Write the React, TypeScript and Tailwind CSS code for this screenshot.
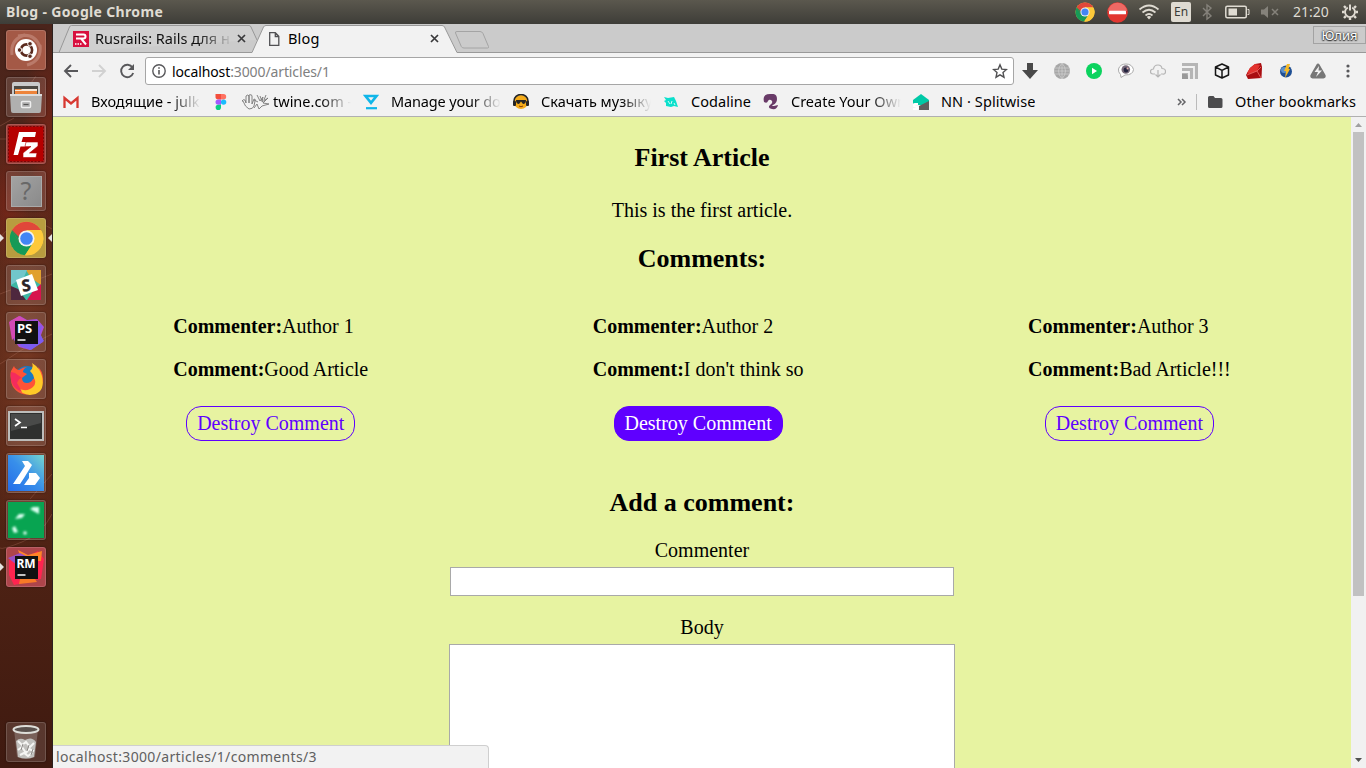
import React from "react";

type Kids = { children?: React.ReactNode };

function Svg({ w = 16, h = 16, vb, children, className = "" }: Kids & { w?: number; h?: number; vb?: string; className?: string }) {
  return (
    <svg width={w} height={h} viewBox={vb ?? `0 0 ${w} ${h}`} className={`block shrink-0 ${className}`} fill="none">
      {children}
    </svg>
  );
}

function ChromeLogo({ size }: { size: number }) {
  return (
    <Svg w={size} h={size} vb="0 0 48 48">
      <circle cx="24" cy="24" r="23" fill="#fdc93a" />
      <path d="M24 24 4.1 12.5A23 23 0 0 1 43.9 12.5H24z" fill="#e0473a" />
      <path d="M4.1 12.5A23 23 0 0 0 22 47l11.500-17.500L24 24z" fill="#169a57" />
      <path d="M4.1 12.5 14 29.500 24 13.500V10z" fill="#e0473a" />
      <path d="M4.1 12.5 14 29.500l2-5z" fill="#169a57" />
      <path d="M24 13.500h20.500A23 23 0 0 1 22 47l11-17z" fill="#fdc93a" />
      <circle cx="24" cy="24" r="11" fill="#f3f3f3" />
      <circle cx="24" cy="24" r="8.600" fill="#4285f4" />
    </Svg>
  );
}

function TopBar() {
  return (
    <header className="flex h-6 shrink-0 items-center bg-linear-to-b from-[#5b584e] to-[#3e3d38] pl-1.5 font-['Noto_Sans',sans-serif] text-[#dfdbd2]">
      <div className="flex-1 pb-px text-[14px] font-bold tracking-[0.34px]">Blog - Google Chrome</div>
      <div className="flex h-6 w-[291px] items-center">
        <div className="flex w-8 justify-start"><ChromeLogo size={20} /></div>
        <div className="flex w-8">
          <Svg w={21} h={21}>
            <circle cx="10.5" cy="10.5" r="10.3" fill="#e23630" />
            <path d="M1 9a9.600 9.600 0 0 1 19 0z" fill="#ee6964" />
            <rect x="2" y="8.700" width="17" height="3.600" rx=".6" fill="#fff" />
          </Svg>
        </div>
        <div className="flex w-8">
          <Svg w={22} h={18} className="-ml-px">
            <path d="M1.500 6.500Q11-1.500 20.500 6.500M4.500 9.500q6.500-5.500 13 0M7.500 12.500q3.500-3 7 0" stroke="#dfdbd2" strokeWidth="1.700" />
            <path d="M8.800 14q2.200-1.800 4.400 0L11 16.500z" fill="#dfdbd2" />
          </Svg>
        </div>
        <div className="flex h-5 w-5 items-center justify-center rounded-[2px] bg-[#dfdbd2] text-[12px] text-[#3c3b37]">En</div>
        <Svg w={12} h={18} className="ml-[10px]">
          <path d="M2 5l8 8-4 3V2l4 3-8 8" stroke="#85827b" strokeWidth="1.400" />
        </Svg>
        <Svg w={25} h={14} className="ml-3">
          <rect x=".8" y="1.200" width="20.500" height="11.500" rx="1.500" stroke="#dfdbd2" strokeWidth="1.500" />
          <rect x="3.500" y="3.500" width="8.500" height="7" fill="#dfdbd2" />
          <path d="M22.500 4.500h1.500v5h-1.500" stroke="#dfdbd2" />
        </Svg>
        <Svg w={18} h={14} className="ml-[11px]">
          <path d="M0 4.500h3L7 1v12L3 9.500H0z" fill="#85827b" />
          <path d="M11 4l6 6m0-6l-6 6" stroke="#85827b" strokeWidth="1.500" />
        </Svg>
        <div className="ml-3.5 w-[41px] pb-px text-[14px]">21:20</div>
        <Svg w={18} h={18} className="ml-[7px]">
          <path d="M6.800 4.600A5 5 0 1 0 11.200 4.600" stroke="#dfdbd2" strokeWidth="1.900" />
          <path d="M9 1.500v6" stroke="#dfdbd2" strokeWidth="2" />
          <path d="M4.800 4.800L3 3M3.500 9H1m3.800 4.200L3 15M9 14.500V17m4.200-3.800L15 15M14.500 9H17m-3.800-4.200L15 3" stroke="#dfdbd2" strokeWidth="2.400" />
        </Svg>
      </div>
    </header>
  );
}

function Tile({ children, tint = "bg-[#ffffff20]" }: Kids & { tint?: string }) {
  return (
    <div className={`relative flex h-10 w-10 shrink-0 items-center justify-center rounded-[3px] border border-[#ffffff26] shadow-[0_0_2px_#0008] ${tint}`}>
      {children}
    </div>
  );
}

function Launcher() {
  return (
    <aside className="relative flex w-[53px] shrink-0 flex-col border-r border-[#2c211f] bg-linear-to-b from-[#4a241b] via-[#5a2817] to-[#3f1a10] pt-1.5 pb-1.5 pl-1.5">
      <svg className="absolute top-0 left-0" width="52" height="744" fill="none">
        <defs>
          <radialGradient id="glowA"><stop stopColor="#8a2416" stopOpacity=".6" /><stop offset="1" stopColor="#8a2416" stopOpacity="0" /></radialGradient>
          <radialGradient id="glowB"><stop stopColor="#7d3b24" stopOpacity=".8" /><stop offset="1" stopColor="#7d3b24" stopOpacity="0" /></radialGradient>
        </defs>
        <ellipse cx="48" cy="115" rx="26" ry="110" fill="url(#glowA)" />
        <ellipse cx="8" cy="180" rx="26" ry="70" fill="url(#glowA)" />
        <ellipse cx="26" cy="340" rx="44" ry="190" fill="url(#glowB)" />
        <path d="M0 102l14-8M0 115h6m30-63l-10 14M52 205q-18-12-34-5T0 216M0 340q25-18 52-30M52 490q-10 20-30 28T0 524M52 450L30 475M0 270l52-20" stroke="#b87a66" strokeOpacity=".3" />
      </svg>
      <div className="relative flex flex-1 flex-col gap-[7px]">
        <Tile tint="bg-[#a45946]">
          <Svg w={38} h={38}>
            <path d="M5 24Q3 8 18 4M33 14q2 16-13 20M11 5q17-4 22 11" stroke="#cf9c8e" strokeWidth="3" strokeOpacity=".5" />
            <circle cx="19" cy="19" r="11" fill="#fff" />
            <circle cx="19.500" cy="19" r="5.600" stroke="#5a2a1e" strokeWidth="2.600" />
            <g fill="#5a2a1e" stroke="#fff" strokeWidth="1"><circle cx="12.500" cy="19" r="2.300" /><circle cx="23" cy="12.800" r="2.300" /><circle cx="23" cy="25.200" r="2.300" /></g>
          </Svg>
        </Tile>
        <Tile>
          <Svg w={34} h={36}>
            <path d="M3 5q0-2 2-2h24q2 0 2 2v12H3z" fill="#c9c9c9" />
            <path d="M5 7h24v9H5z" fill="#4d4942" /><path d="M6 10h22v6H6z" fill="#ed843b" /><path d="M6 11h6l1-1h15v2H6z" fill="#f7e6d6" />
            <path d="M1 15h32l-1 17q0 2-2 2H4q-2 0-2-2z" fill="#b0b0af" />
            <path d="M1 15h32v2H1z" fill="#ddd" />
            <rect x="12.500" y="22.500" width="9" height="6" rx="1" fill="#aaa" stroke="#eee" strokeWidth="1.500" /><path d="M14.500 25.500h5" stroke="#555" />
          </Svg>
        </Tile>
        <Tile tint="bg-[#9c3b35]">
          <Svg w={38} h={38}>
            <rect x="1.500" y="1.500" width="35" height="35" fill="#b60000" stroke="#790607" strokeDasharray="2 1.500" />
            <path d="M12 7h17l-1 5H16l-1.500 5H23l-1 4.500h-8.500L11 30H6.500z" fill="#fff" />
            <path d="M19 17h12v4l-8.500 7H30l-1 4.500H16V28l8-6.500h-6z" fill="#fff" stroke="#b60000" strokeWidth=".6" />
          </Svg>
        </Tile>
        <Tile>
          <div className="flex h-[31px] w-[31px] items-center justify-center border border-[#aaa] bg-linear-to-br from-[#a3a3a3] to-[#8a8a8a] font-['Noto_Sans',sans-serif] text-[25px] text-[#686868]">?</div>
        </Tile>
        <Tile tint="bg-[#b89c3f]"><ChromeLogo size={35} /></Tile>
        <Tile>
          <Svg w={32} h={32}>
            <rect x="1" y="1" width="30" height="30" fill="#3db6a4" />
            <path d="M16 1h15v15L21 9z" fill="#e1a02e" /><path d="M31 15v16H17l6-9z" fill="#d7144e" /><path d="M16 31H1V17l7 3z" fill="#4e283e" /><path d="M1 1h16l-3 7-13 8z" fill="#71c6cb" />
            <path d="M6 11l16-6 6 16-17 6z" fill="#fff" />
            <text x="16" y="22" textAnchor="middle" fontFamily="Noto Sans" fontSize="16" fontWeight="700" fill="#2b2427" stroke="#2b2427" strokeWidth=".5" transform="rotate(-10 16 16)">S</text>
          </Svg>
        </Tile>
        <Tile>
          <Svg w={38} h={38}>
            <path d="M3 8l10-5 7 4 10-1 7 8-3 8 2 7-13 8-11-3-5-7z" fill="#a650dc" /><path d="M2 9l10-6 7 4-8 14-6 6z" fill="#d44bb6" /><path d="M21 18l14-6-2 9 4 7-13 9-11-4z" fill="#7c5cf0" />
            <rect x="8" y="8" width="23" height="23" fill="#111" />
            <text x="10" y="20" fontFamily="Noto Sans" fontSize="13" fontWeight="700" fill="#fff">PS</text><path d="M10.500 27h8" stroke="#fff" strokeWidth="1.500" />
          </Svg>
        </Tile>
        <Tile>
          <Svg w={38} h={38}>
            <circle cx="20" cy="19" r="13" fill="#197ac3" />
            <path d="M4 11l3-5q1 3 5 4 4-3 8-3-4 2-4 5l4 2-5 4q0 5 5 5 4 0 6-4 3-1 0-3 8-2 5-9 5 4 5 12a16 15 0 0 1-32 1Q3 14 4 11z" fill="#ff5337" />
            <path d="M25 3q8 5 10 13 4 18-12 19-9-1-11-6 9 3 14-2 4-4 1-9 0-3-4-7 4-3 2-8z" fill="#ffc928" />
            <path d="M4 12q-2 15 11 20l-5-9q2-5 5-5l-7-5z" fill="#f52b5d" />
          </Svg>
        </Tile>
        <Tile>
          <Svg w={36} h={30}>
            <rect x="1" y="1" width="34" height="28" fill="#2f302f" stroke="#bdbdbb" strokeWidth="2" />
            <path d="M3 3h30v9L3 20z" fill="#fff" fillOpacity=".13" />
            <path d="M7 8l5 3.500L7 15m6 1.500h6" stroke="#fff" strokeWidth="1.700" />
          </Svg>
        </Tile>
        <Tile>
          <Svg w={38} h={38}>
            <defs><linearGradient id="br" x1="1" x2="0" y1="0" y2="1"><stop stopColor="#75d5cf" /><stop offset=".5" stopColor="#388fea" /><stop offset="1" stopColor="#246ce9" /></linearGradient></defs>
            <rect x="1" y="1" width="36" height="36" fill="url(#br)" />
            <path d="M15 7h6l4 4-8 13-4 6H6l8-12 4-6z" fill="#fff" /><path d="M22 19h7l4 5-5 7H17l5-7z" fill="#fff" />
          </Svg>
        </Tile>
        <Tile>
          <Svg w={38} h={38}>
            <defs><filter id="soft"><feGaussianBlur stdDeviation="1" /></filter></defs>
            <rect x="1" y="1" width="36" height="36" fill="#08a451" />
            <g fill="#d9fff0" filter="url(#soft)"><path d="M23 8l3-2 6 0 0 7-4-2z" /><path d="M8 18l4-5 6 0-3 4z" /><path d="M5 27l3-2 3 6-4 1z" /><circle cx="18" cy="32" r="1.800" /></g>
          </Svg>
        </Tile>
        <Tile tint="bg-[#ae454b]">
          <Svg w={38} h={38}>
            <path d="M2 12l11-6 8 2 10-5 6 8-3 20-14 3-13 3L2 27z" fill="#ff244f" /><path d="M11 2l10 5 14-4-1 10H15z" fill="#ff8427" /><path d="M1 10l12-5 8 4-11 8z" fill="#9850c4" /><path d="M13 31h15l2 3-18 2z" fill="#f87a27" />
            <rect x="8" y="8" width="23" height="23" fill="#111" />
            <text x="9.500" y="20" fontFamily="Noto Sans" fontSize="12" fontWeight="700" fill="#fff">RM</text><path d="M10.500 27h8" stroke="#fff" strokeWidth="1.500" />
          </Svg>
        </Tile>
        <div className="mt-auto">
          <Tile>
            <Svg w={38} h={38}>
              <path d="M7 6l3 28q9 4 18 0l3-28z" fill="#ddd" fillOpacity=".25" />
              <path d="M9 18q4-4 9-1 7-4 11 2l-2 15q-8 3-16 0z" fill="#c1c0bd" />
              <path d="M11 18l4 4 4-3 4 5 4-4M11 27l4-3 4 6 3-4 5 2M13 32l4-2 4 3 4-3" stroke="#f5f5f3" strokeWidth="2" /><path d="M16 21l-2 6m8-5l-2 6m6-2l-2 6" stroke="#8c8986" />
              <ellipse cx="19" cy="6.500" rx="12.500" ry="3.500" fill="#5a514d" stroke="#deded9" strokeWidth="2" />
            </Svg>
          </Tile>
        </div>
      </div>
      <svg className="absolute top-[208px] left-0" width="52" height="12" fill="#e5e2df"><path d="M0 2l4 4-4 4zM52 2l-4 4 4 4z" /></svg>
      <svg className="absolute top-[537px] left-0" width="5" height="12" fill="#e5e2df"><path d="M0 2l4 4-4 4z" /></svg>
    </aside>
  );
}

function CloseX() {
  return <Svg w={9} h={9}><path d="M1 1l7 7m0-7l-7 7" stroke="#39393b" strokeWidth="1.700" /></Svg>;
}

function TabStrip() {
  return (
    <div className="relative flex h-[29px] shrink-0 bg-[#cbcbcb] text-[14.500px]">
      <svg className="absolute inset-0" width="1313" height="29" fill="none">
        <path d="M0 28.500H6L16.500 3q.6-1.500 2-1.500H196q1.500 0 2 1.500l6 13" stroke="#989898" fill="#d0d0d0" />
        <path d="M0 28.500H199L210.500 3q.8-1.500 2.500-1.500H389q1.700 0 2.500 1.500L404 28.500H1313V30H0z" fill="#f2f2f2" />
        <path d="M0 28.500H199L210.500 3q.8-1.500 2.500-1.500H389q1.700 0 2.500 1.500L404 28.500H1313" stroke="#999" />
        <path d="M404 7.500h23q2 0 3 2l5.500 13q.5 1.500-1 1.500H411q-2 0-2.700-1.500L402.500 9q-.5-1.500 1.500-1.500z" stroke="#a4a4a4" />
      </svg>
      <div className="relative flex w-[195px] items-center pl-5">
        <Svg>
          <rect width="16" height="16" fill="#d8103f" />
          <path d="M3 3.500h7.500q2 0 2 2t-2 2H8l5 6M3 7.500h5" stroke="#fff" strokeWidth="2" /><path d="M2 13h7" stroke="#fff" strokeWidth="1.500" strokeDasharray="1.500 1" />
        </Svg>
        <div className="ml-1.5 w-[138px] overflow-hidden mask-r-from-75% whitespace-nowrap text-[#111]">Rusrails: Rails для н</div>
        <div className="ml-1"><CloseX /></div>
      </div>
      <div className="relative flex flex-1 items-center pl-5">
        <Svg w={12} h={16}><path d="M1.700 1.700h5.600l3.500 3.600v9H1.700zM7.300 1.700v3.800h3.500" stroke="#515154" strokeWidth="1.300" /></Svg>
        <div className="ml-2 w-[142px] text-black tracking-[0.2px]">Blog</div>
        <CloseX />
      </div>
      <div className="relative mt-[2px] h-[18px] w-[53px] border border-[#a3a3a3] text-center text-[13px] leading-[17px] text-white [text-shadow:0_0_2px_#333,0_0_2px_#333,0_1px_1px_#333]">Юлия</div>
    </div>
  );
}

const extensions: React.ReactNode[] = [
  <path key="d" d="M5 0h6v7h5l-8 9-8-9h5z" fill="#494949" />,
  <g key="g"><circle cx="8" cy="8" r="8" fill="#a7a7a7" /><path d="M1 5h14M0 8h16M1 11h14M8 0v16M8 0Q1 8 8 16M8 0q7 8 0 16" stroke="#d3d3d3" strokeWidth=".7" /></g>,
  <g key="p"><circle cx="8" cy="8" r="8" fill="#0bd35e" /><path d="M6 4.800L11 8l-5 3.200z" fill="#fff" /></g>,
  <g key="e"><path d="M2.500 11.500Q0 9 .5 6 2 1 8 1t7.500 5.500Q15 12 7 12l-4 2.500z" fill="#fff" stroke="#aaa" /><circle cx="7.800" cy="6.500" r="4.300" fill="#756878" /><circle cx="8" cy="7" r="2.400" fill="#23233e" /><circle cx="9.500" cy="5.500" r="1" fill="#e2b2ac" /></g>,
  <path key="c" d="M5 11H3Q.5 11 .5 8.500T3.500 6Q4 2 8 2q3.500 0 4 3.500 3.500 0 3.500 3T12.500 11H11M8 7v7m-2.500-2.500L8 14l2.500-2.500" stroke="#b5b5b5" strokeWidth="1.200" />,
  <g key="r"><path d="M0 0h16v16H0z" fill="#b5b5b5" /><path d="M0 4h12v12M0 9h7v7" stroke="#f2f2f2" strokeWidth="1.800" /><path d="M0 11h4q2 0 2 5H0z" fill="#999" /></g>,
  <path key="b" d="M8 1l6.500 3v8L8 15l-6.500-3V4zM1.500 4L8 7.300 14.500 4M8 7.300V15" stroke="#161616" strokeWidth="1.500" strokeLinejoin="round" />,
  <g key="rb"><path d="M9 1l6-1 1 4-.5 11L2 16l-2-4 4-7z" fill="#a90d10" /><path d="M9 1l5 1-3 6-8 3-2-1 3-5z" fill="#e3332f" /><path d="M1 12l10-4 4-4M11 8l4 7" stroke="#f0716c" strokeWidth=".8" /></g>,
  <g key="z"><circle cx="8" cy="8.500" r="6" fill="#1f4f94" /><circle cx="6" cy="7" r="3" fill="#5d91cb" /><path d="M9 1h3l-1.500 5H12l-5 9 1-7H6z" fill="#f5b927" /></g>,
  <g key="a"><path d="M8 .5q1 0 1.500 1l6 10.500q1 3-2 3.500h-11Q-.5 15 .5 12l6-10.500Q7 .5 8 .5z" fill="#777" /><path d="M9 3L4.500 9H8l-2 5 6-6.500H8.500z" fill="#f2f2f2" /></g>,
];

function Toolbar() {
  return (
    <div className="flex h-9 shrink-0 items-center bg-[#f2f2f2] text-[14px]">
      <div className="flex w-[92px] items-center gap-3 pl-[10px]">
        <Svg><path d="M15 8H2m6-6L2 8l6 6" stroke="#58585b" strokeWidth="1.900" /></Svg>
        <Svg><path d="M1 8h13M8 2l6 6-6 6" stroke="#d1d1d1" strokeWidth="1.900" /></Svg>
        <Svg><path d="M13.500 4.500A6.200 6.200 0 1 0 14.200 10" stroke="#58585b" strokeWidth="1.900" /><path d="M15 1v6H9z" fill="#58585b" /></Svg>
      </div>
      <div className="flex h-7 w-[869px] items-center rounded-[3px] border border-[#a6a6a6] bg-white pr-[5px] pl-[5px]">
        <Svg><circle cx="8" cy="8" r="6.200" stroke="#58585b" strokeWidth="1.400" /><path d="M8 7v4.500M8 4.300v1.500" stroke="#58585b" strokeWidth="1.600" /></Svg>
        <div className="ml-[5px] flex-1 tracking-[-0.11px] text-[#808080]"><span className="text-black">localhost</span>:3000/articles/1</div>
        <Svg><path d="M8 1.800l1.800 4.300 4.700.4L11 9.600l1 4.600L8 11.800l-4 2.400 1-4.600L1.500 6.500l4.700-.4z" stroke="#505052" strokeWidth="1.400" /></Svg>
      </div>
      <div className="ml-2 flex gap-4">{extensions.map((e, i) => <Svg key={i}>{e}</Svg>)}</div>
      <Svg w={4} h={16} className="ml-5"><g fill="#58585b"><circle cx="2" cy="3" r="1.600" /><circle cx="2" cy="8" r="1.600" /><circle cx="2" cy="13" r="1.600" /></g></Svg>
    </div>
  );
}

function Mark({ icon, label, width, fade, before, tracking = "" }: { icon: React.ReactNode; label: string; width: string; fade?: boolean; before?: React.ReactNode; tracking?: string }) {
  return (
    <div className={`flex shrink-0 items-center ${width}`}>
      <Svg>{icon}</Svg>
      <div className={`ml-3 flex items-center overflow-hidden whitespace-nowrap ${tracking} ${fade ? "w-[110px] mask-r-from-72%" : ""}`}>{before}{label}</div>
    </div>
  );
}

function Bookmarks() {
  return (
    <div className="flex h-7 shrink-0 items-center border-b border-[#b0b0b0] bg-[#f2f2f2] pb-[2px] pl-[10px] text-[14.500px] text-black">
      <Mark width="w-[150px]" fade label="Входящие - julk" icon={<><path d="M1 3h14v11H1z" fill="#f5f5f5" /><path d="M1.500 14V4L8 9.500 14.500 4v10" stroke="#d73932" strokeWidth="2.300" /></>} />
      <Mark width="w-[150px]" fade label="twine.com -" before={
        <Svg w={30} h={18} className="mr-0.5"><path d="M1 8q1-2 3-1l1 3V3q2-2 3 0v7-8q3-1 3 1v8l2-5q2 0 1 2l-1 5q-1 3-5 3-4-2-6-8zM16 2l3 6 3-4-1 5 6-4-5 5 6 1-7 2-3 3-2-5-3 4m0-8l4 2m2-6l2 5m4-6l-2 5" stroke="#777" strokeWidth=".9" /></Svg>
      } icon={<><path d="M2.500 0H8v5.400H5.200A2.700 2.700 0 0 1 2.500 2.700z" fill="#f34e3c" /><path d="M8 0h2.500a2.700 2.700 0 0 1 0 5.400H8z" fill="#ff7262" /><path d="M8 5.400H5.200a2.700 2.700 0 0 0 0 5.400H8z" fill="#a259ff" /><circle cx="10.600" cy="8.100" r="2.700" fill="#1abcfe" /><path d="M8 10.800H5.200A2.700 2.700 0 1 0 8 13.500z" fill="#0acf83" /></>} />
      <Mark width="w-[150px]" fade tracking="tracking-[-0.15px]" label="Manage your do" icon={<><path d="M2.500 2h11L8 8.800z" stroke="#10b6e9" strokeWidth="2.700" /><path d="M3 14.200h11" stroke="#10b6e9" strokeWidth="2.200" /></>} />
      <Mark width="w-[150px]" fade label="Скачать музыку" icon={<><circle cx="8" cy="8" r="7" fill="#f5ac1a" /><path d="M1 9V7a7 6.500 0 0 1 14 0v2" stroke="#252525" strokeWidth="1.600" /><rect y="7" width="3" height="5" rx="1" fill="#252525" /><rect x="13" y="7" width="3" height="5" rx="1" fill="#252525" /><path d="M3 6h10q0 4-3 4L8 7.500 6 10Q3 10 3 6z" fill="#252525" /><path d="M6 12q2 1.500 4 0" stroke="#843b0e" /></>} />
      <Mark width="w-[100px]" tracking="tracking-[0.05px]" label="Codaline" icon={<><path d="M1 3l4 1 6-1 2 4 2 6-4-1-3 1-5-1v-3L1 7l2-1z" fill="#0be0cc" /><path d="M5 7l2 3m2-3l-1 3m3-1l1 2" stroke="#e8fffc" strokeWidth=".9" /></>} />
      <Mark width="w-[150px]" fade label="Create Your Own" icon={<path d="M1 8Q-1 0 7 0q7-1 7 5 0 4-4 6-2 1 1 1l4-1q-1 5-6 4-5-1-2-4 4-3 1-5-2-1-3 1-1 3-4 1z" fill="#693b68" />} />
      <Mark width="w-[255px]" tracking="tracking-[0.08px]" label="NN · Splitwise" icon={<><path d="M0 6l8-6 8 6v5H0z" fill="#00c9a7" /><path d="M6 16V12l10-5v9z" fill="#5e5e5e" /><path d="M5 10H2q-2 0-1 2l3 1q2 1 0 2H0" stroke="#fff" strokeWidth="2" /></>} />
      <Svg w={10} h={10} className="ml-[9px]"><path d="M1 2l3 3L1 8m4-6l3 3L5 8" stroke="#646467" strokeWidth="1.500" /></Svg>
      <div className="ml-[9px] h-4 w-px bg-[#bbb]" />
      <Svg className="ml-[11px]"><path d="M0 3.500Q0 2 1.500 2h4L7 4h6q1.500 0 1.500 1.500v7Q14.500 14 13 14H1.500Q0 14 0 12.500z" fill="#4c4c4e" /></Svg>
      <div className="ml-[11px] whitespace-nowrap tracking-[0.06px]">Other bookmarks</div>
    </div>
  );
}

function CommentCard({ author, body, active }: { author: string; body: string; active?: boolean }) {
  return (
    <div className="flex flex-col items-center">
      <div className="flex flex-col gap-5 self-stretch leading-[23px]">
        <p><b>Commenter:</b>{author}</p>
        <p><b>Comment:</b>{body}</p>
      </div>
      <button className={`mt-[25px] h-[35px] rounded-[15px] border border-[#5f00ff] px-[10px] leading-[33px] ${active ? "bg-[#5f00ff] text-white" : "text-[#5f00ff]"}`}>Destroy Comment</button>
    </div>
  );
}

function Page() {
  return (
    <main className="flex min-h-0 flex-1 overflow-hidden bg-[#e7f3a1]">
      <div className="flex flex-1 flex-col items-center px-2 pt-[26px] font-['Liberation_Serif',serif] text-[20px] leading-[23px] text-black">
        <h2 className="text-[26px] leading-[30px] font-bold">First Article</h2>
        <p className="mt-[26px]">This is the first article.</p>
        <h2 className="mt-[22px] text-[26px] leading-[30px] font-bold">Comments:</h2>
        <section className="mt-[41px] flex justify-around self-stretch">
          <CommentCard author="Author 1" body="Good Article" />
          <CommentCard author="Author 2" body="I don't think so" active />
          <CommentCard author="Author 3" body="Bad Article!!!" />
        </section>
        <h2 className="mt-[47px] text-[26px] leading-[30px] font-bold">Add a comment:</h2>
        <label className="mt-[21px]">Commenter</label>
        <input className="mt-[5px] h-[29px] w-[504px] shrink-0 border border-[#a9a9a9] bg-white" />
        <label className="mt-5">Body</label>
        <textarea className="mt-[5px] h-[200px] w-[506px] shrink-0 resize-none border border-[#a9a9a9] bg-white" />
      </div>
      <div className="flex w-[15px] flex-col items-center bg-[#f1f1f1]">
        <Svg w={15} h={15}><path d="M4 10h7L7.500 6z" fill="#a0a0a0" /></Svg>
        <div className="h-[464px] w-[11px] bg-[#c1c1c1]" />
        <Svg w={15} h={15} className="mt-auto"><path d="M4 5h7L7.500 9z" fill="#505050" /></Svg>
      </div>
    </main>
  );
}

export default function App() {
  return (
    <div className="flex h-[768px] w-[1366px] flex-col overflow-hidden">
      <TopBar />
      <div className="flex min-h-0 flex-1">
        <Launcher />
        <div className="relative flex min-w-0 flex-1 flex-col font-['Noto_Sans',sans-serif]">
          <TabStrip />
          <Toolbar />
          <Bookmarks />
          <Page />
          <div className="absolute bottom-0 left-0 h-[23px] w-[436px] rounded-tr-[4px] border-t border-r border-[#cfcfcf] bg-[#f2f2f2] pl-[3px] text-[14px] leading-[22px] tracking-[0.34px] text-[#606060]">localhost:3000/articles/1/comments/3</div>
        </div>
      </div>
    </div>
  );
}
